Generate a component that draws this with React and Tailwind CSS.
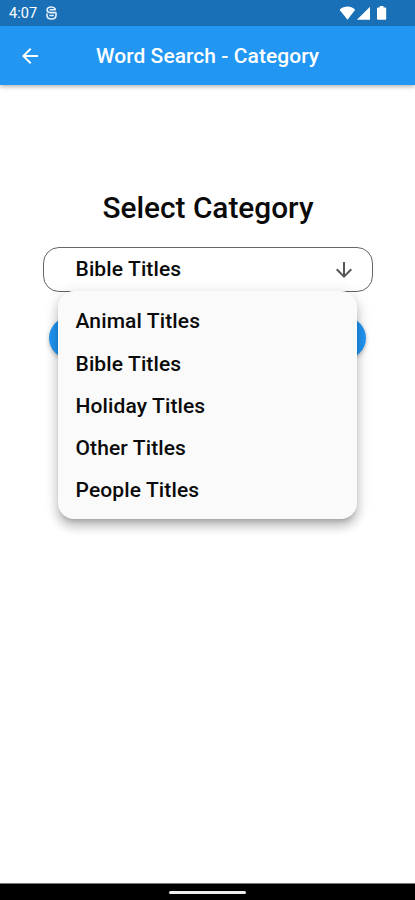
import { useState } from 'react'

const categories = ['Animal Titles', 'Bible Titles', 'Holiday Titles', 'Other Titles', 'People Titles']

const StatusBar = () => (
  <div className="flex h-[26px] shrink-0 items-center justify-between bg-[#1a70b7] pl-[9px] pr-[27px] text-white">
    <div className="flex items-center gap-[9px]">
      <span className="pt-[2px] text-[14.5px] leading-[24px] tracking-[0.1px]">4:07</span>
      <svg width="11" height="14" viewBox="0 0 11 14" fill="none" stroke="#e4f0fa" strokeWidth="1.6">
        <path d="M9.600 3.400C8.700 1.700 7.300 1 5.500 1 3 1 1.100 2.300 1.100 4.100c0 1.700 1.200 2.500 3 2.500h6.100" />
        <path d="M3.600 3.800h6.300M1 7.600v1.600C1 11.600 3 13 5.500 13s4.500-1.400 4.500-3.800V6.600M3.300 9.500h4.500" />
      </svg>
    </div>
    <svg width="48" height="16" viewBox="0 0 48 16" fill="currentColor">
      <path d="M-0.400 4.700C4 0.500 10.800 0.500 15.200 4.700L7.500 14.800Z" />
      <path d="M30 1.700V14.800H16.900Z" />
      <path d="M39.700 1h3.800v1.500h1.700a1 1 0 0 1 1 1v10.300a1 1 0 0 1-1 1h-7.200a1 1 0 0 1-1-1V3.500a1 1 0 0 1 1-1h1.700z" />
    </svg>
  </div>
)

const AppBar = () => (
  <header className="z-10 flex h-[59px] shrink-0 items-center bg-[#2196f3] px-[18px] text-white shadow-[0_2px_4px_rgba(0,0,0,0.28)]">
    <button type="button" aria-label="Back" className="w-[78px]">
      <svg width="24" height="24" viewBox="0 0 24 24" fill="currentColor">
        <path d="M20 11H7.830l5.590-5.590L12 4l-8 8 8 8 1.410-1.410L7.830 13H20v-2z" />
      </svg>
    </button>
    <h1 className="whitespace-nowrap text-[21px] font-medium leading-[28px] tracking-[0.05px]">Word Search - Category</h1>
  </header>
)

const App = () => {
  const [selected, setSelected] = useState('Bible Titles')
  const [open, setOpen] = useState(true)

  const handleSelect = (item) => {
    setSelected(item)
    setOpen(false)
  }

  return (
    <div className="flex h-[900px] w-[415px] flex-col overflow-hidden bg-white font-['Roboto',sans-serif] text-[#0a0a0a]">
      <StatusBar />
      <AppBar />

      <main className="flex flex-1 flex-col items-center pt-[103px]">
        <h2 className="pl-[1px] text-[29.8px] font-medium leading-[40px]">Select Category</h2>

        <div className="relative mt-[19px] w-[330px]">
          <button type="button" onClick={() => setOpen(!open)}
            className="flex h-[45px] w-full items-center justify-between rounded-[16px] border border-[#666] pl-[32px] pr-[16px] text-[21px] font-medium tracking-[0.12px]">
            <span className="pt-[1px]">{selected}</span>
            <svg width="24" height="24" viewBox="0 0 24 24" fill="#555">
              <path d="M20 12l-1.410-1.410L13 16.170V4h-2v12.170l-5.580-5.590L4 12l8 8 8-8z" />
            </svg>
          </button>

          {open && (
            <ul className="absolute left-[15.5px] top-[44px] z-10 w-[299px] rounded-[16px] bg-[#fafafa] pb-[7px] pt-[10px] shadow-[0_5px_5px_-3px_rgba(0,0,0,0.2),0_8px_10px_1px_rgba(0,0,0,0.14),0_3px_14px_2px_rgba(0,0,0,0.12)]">
              {categories.map(item => (
                <li key={item} onClick={() => handleSelect(item)}
                  className="flex h-[42.2px] cursor-pointer items-center px-[17.5px] text-[21px] font-medium tracking-[0.12px]">
                  {item}
                </li>
              ))}
            </ul>
          )}
        </div>

        <button type="button" aria-label="Start" className="mt-[25px] h-[42px] w-[317px] rounded-full bg-[#2196f3] shadow-[0_2px_4px_rgba(0,0,0,0.25)]" />
      </main>

      <nav className="flex h-[17px] shrink-0 items-center justify-center border-t border-[#777] bg-black">
        <div className="h-[3px] w-[77px] rounded-full bg-[#eee]" />
      </nav>
    </div>
  )
}

export default App
